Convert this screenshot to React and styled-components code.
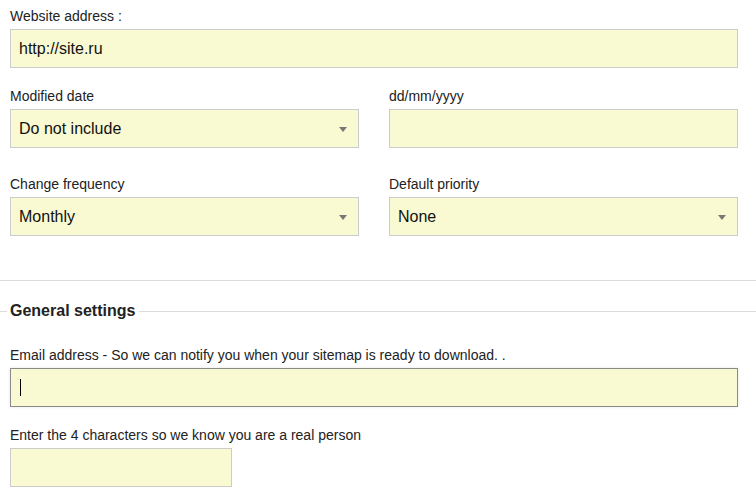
import React from 'react';
import styled, { createGlobalStyle } from 'styled-components';

const GlobalStyle = createGlobalStyle`
  body {
    margin: 0;
    background: #ffffff;
    font-family: "Liberation Sans", Arial, sans-serif;
    color: #222;
  }
`;

const Form = styled.div`
  width: 756px;
  padding-top: 8px;
`;

const Section = styled.div`
  padding: 0 18px 0 10px;
`;

const Row = styled.div`
  display: grid;
  grid-template-columns: ${(p) => (p.$split ? '1fr 1fr' : '1fr')};
  column-gap: 30px;
  margin-top: ${(p) => p.$top || 0}px;
`;

const Field = styled.div`
  display: flex;
  flex-direction: column;
  align-items: flex-start;
`;

const Label = styled.div`
  font-size: 14px;
  line-height: 16px;
  height: 16px;
  margin-bottom: 5px;
  color: #222;
`;

const Box = styled.div`
  position: relative;
  box-sizing: border-box;
  width: ${(p) => p.$width || '100%'};
  height: 39px;
  background: #f9f9d2;
  border: 1px solid ${(p) => (p.$focused ? '#8a8a8a' : '#ccc')};
  box-shadow: ${(p) => (p.$focused ? '0 0 3px rgba(0,0,0,0.1)' : 'none')};
  font-size: 16px;
  line-height: 37px;
  padding: 0 8px;
  color: #111;
  display: flex;
  align-items: center;
`;

const Arrow = styled.span`
  position: absolute;
  right: 11px;
  top: 17px;
  width: 0;
  height: 0;
  border-left: 4px solid transparent;
  border-right: 4px solid transparent;
  border-top: 5px solid #777;
`;

const Caret = styled.span`
  display: inline-block;
  width: 1px;
  height: 17px;
  margin-left: 1px;
  background: #000;
`;

const Divider = styled.div`
  height: 1px;
  background: #dcdcdc;
  margin-top: 44px;
`;

const LegendRow = styled.div`
  display: flex;
  align-items: center;
  margin-top: 20px;
  height: 20px;
`;

const LegendLine = styled.div`
  height: 1px;
  background: #dcdcdc;
  flex: ${(p) => (p.$grow ? 1 : 'none')};
  width: ${(p) => (p.$grow ? 'auto' : '7px')};
`;

const LegendText = styled.div`
  font-size: 16px;
  font-weight: bold;
  line-height: 20px;
  padding: 0 4px 0 3px;
  color: #222;
`;

function Select({ value }) {
  return (
    <Box>
      {value}
      <Arrow />
    </Box>
  );
}

export default function App() {
  return (
    <Form>
      <GlobalStyle />
      <Section>
        <Row>
          <Field>
            <Label>Website address :</Label>
            <Box>http://site.ru</Box>
          </Field>
        </Row>
        <Row $split $top={20}>
          <Field>
            <Label>Modified date</Label>
            <Select value="Do not include" />
          </Field>
          <Field>
            <Label>dd/mm/yyyy</Label>
            <Box />
          </Field>
        </Row>
        <Row $split $top={28}>
          <Field>
            <Label>Change frequency</Label>
            <Select value="Monthly" />
          </Field>
          <Field>
            <Label>Default priority</Label>
            <Select value="None" />
          </Field>
        </Row>
      </Section>
      <Divider />
      <LegendRow>
        <LegendLine />
        <LegendText>General settings</LegendText>
        <LegendLine $grow />
      </LegendRow>
      <Section>
        <Row $top={26}>
          <Field>
            <Label>Email address - So we can notify you when your sitemap is ready to download. .</Label>
            <Box $focused>
              <Caret />
            </Box>
          </Field>
        </Row>
        <Row $top={20}>
          <Field>
            <Label>Enter the 4 characters so we know you are a real person</Label>
            <Box $width="222px" />
          </Field>
        </Row>
      </Section>
    </Form>
  );
}
